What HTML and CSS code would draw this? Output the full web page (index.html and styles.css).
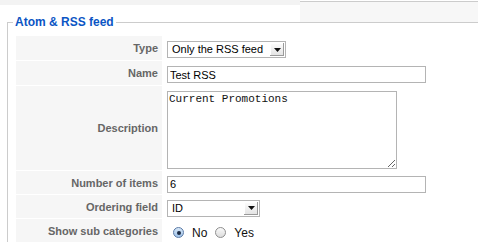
FILE: index.html
```html
<!DOCTYPE html>
<html lang="en">
<head>
    <title>Atom &amp; RSS feed</title>
    <meta charset="UTF-8">
    <link rel="stylesheet" href="styles.css">
</head>
<body>
    <div class="topbar">
        <div class="topbar-left"></div>
        <div class="topbar-right"></div>
    </div>

    <fieldset class="adminform">
        <legend>Atom &amp; RSS feed</legend>
        <table class="paramlist">
            <tr class="row">
                <td class="key">Type</td>
                <td class="value">
                    <div class="select type-select">
                        <span class="select-text">Only the RSS feed</span>
                        <span class="select-arrow"><svg width="7" height="4" viewBox="0 0 7 4"><path d="M0 0h7L3.5 4z" fill="#111"/></svg></span>
                    </div>
                </td>
            </tr>
            <tr class="row">
                <td class="key">Name</td>
                <td class="value"><input class="text" type="text" value="Test RSS"></td>
            </tr>
            <tr class="row tall">
                <td class="key">Description</td>
                <td class="value"><textarea class="desc">Current Promotions</textarea></td>
            </tr>
            <tr class="row short">
                <td class="key">Number of items</td>
                <td class="value"><input class="text" type="text" value="6"></td>
            </tr>
            <tr class="row short">
                <td class="key">Ordering field</td>
                <td class="value">
                    <div class="select order-select">
                        <span class="select-text">ID</span>
                        <span class="select-arrow"><svg width="7" height="4" viewBox="0 0 7 4"><path d="M0 0h7L3.5 4z" fill="#111"/></svg></span>
                    </div>
                </td>
            </tr>
            <tr class="row">
                <td class="key">Show sub categories</td>
                <td class="value">
                    <div class="radios">
                        <span class="radio checked"><span class="dot"></span></span>
                        <span class="radio-label">No</span>
                        <span class="radio"></span>
                        <span class="radio-label">Yes</span>
                    </div>
                </td>
            </tr>
        </table>
    </fieldset>
</body>
</html>
```

FILE: styles.css
```css
body {
    margin: 0;
    width: 478px;
    height: 242px;
    overflow: hidden;
    background-color: #fff;
    font-family: "Liberation Sans", Arial, sans-serif;
    font-size: 11px;
    color: #333;
}

.topbar {
    display: flex;
    height: 15px;
}
.topbar-left {
    flex: 1;
    height: 5px;
    background-color: #f3f3f3;
}
.topbar-right {
    width: 178px;
    height: 20px;
    margin-top: 1px;
    border-top: 1px solid #ccc;
    background-color: #f7f7f7;
}

.adminform {
    margin: 0 -40px 0 7px;
    padding: 5px 0 0 7px;
    border: 1px solid #ccc;
    border-right: none;
    border-bottom: none;
    min-width: 0;
}
.adminform legend {
    margin-left: -2px;
    padding: 0 2px;
    font-size: 12px;
    line-height: 15px;
    font-weight: bold;
    color: #0b55c4;
    background-color: #fff;
}

.paramlist {
    border-collapse: separate;
    border-spacing: 1px;
}
.paramlist td {
    box-sizing: border-box;
    padding: 0;
}
.row td {
    height: 24px;
}
.row.short td {
    height: 23px;
}
.row.tall td {
    height: 84px;
}
.key {
    width: 146px;
    padding-right: 4px !important;
    background-color: #f6f6f6;
    text-align: right;
    vertical-align: middle;
    font-weight: bold;
    color: #666;
}
.value {
    width: 300px;
    padding: 3px 0 0 4px !important;
    vertical-align: middle;
}

.text {
    display: block;
    box-sizing: border-box;
    width: 259px;
    height: 17px;
    margin: 0;
    padding: 0 2px;
    border: 1px solid #b4b4b4;
    font-family: "Liberation Sans", Arial, sans-serif;
    font-size: 11px;
    color: #000;
    outline: none;
}

.desc {
    display: block;
    box-sizing: border-box;
    width: 230px;
    height: 78px;
    margin: 0;
    padding: 1px 1px;
    border: 1px solid #b4b4b4;
    font-family: "Liberation Mono", "Courier New", monospace;
    font-size: 11px;
    color: #111;
    resize: both;
    outline: none;
}

.select {
    display: flex;
    box-sizing: border-box;
    height: 17px;
    border: 1px solid #b4b4b4;
    background-color: #fff;
    color: #000;
}
.type-select {
    width: 119px;
}
.order-select {
    width: 93px;
}
.select-text {
    flex: 1;
    padding-left: 4px;
    line-height: 15px;
}
.select-arrow {
    display: flex;
    align-items: center;
    justify-content: center;
    width: 14px;
    margin: 1px 1px 1px 0;
    background: linear-gradient(#fdfdfd, #e2e2e2);
    box-shadow: inset -1px -1px 0 #9a9a9a, inset 1px 1px 0 #fff;
}

.radios {
    display: flex;
    align-items: center;
    padding-left: 6px;
}
.radio {
    display: flex;
    align-items: center;
    justify-content: center;
    box-sizing: border-box;
    width: 11px;
    height: 11px;
    border: 1px solid #8e8e8e;
    border-radius: 50%;
    background: linear-gradient(#fafafa, #dcdcdc);
}
.radio.checked {
    border-color: #5a7aa6;
    background: linear-gradient(#d7e7f7, #9fc2e8);
}
.dot {
    width: 4px;
    height: 4px;
    border-radius: 50%;
    background-color: #1c2b44;
}
.radio-label {
    margin: 0 8px 0 8px;
    font-size: 12px;
    color: #111;
}
```
